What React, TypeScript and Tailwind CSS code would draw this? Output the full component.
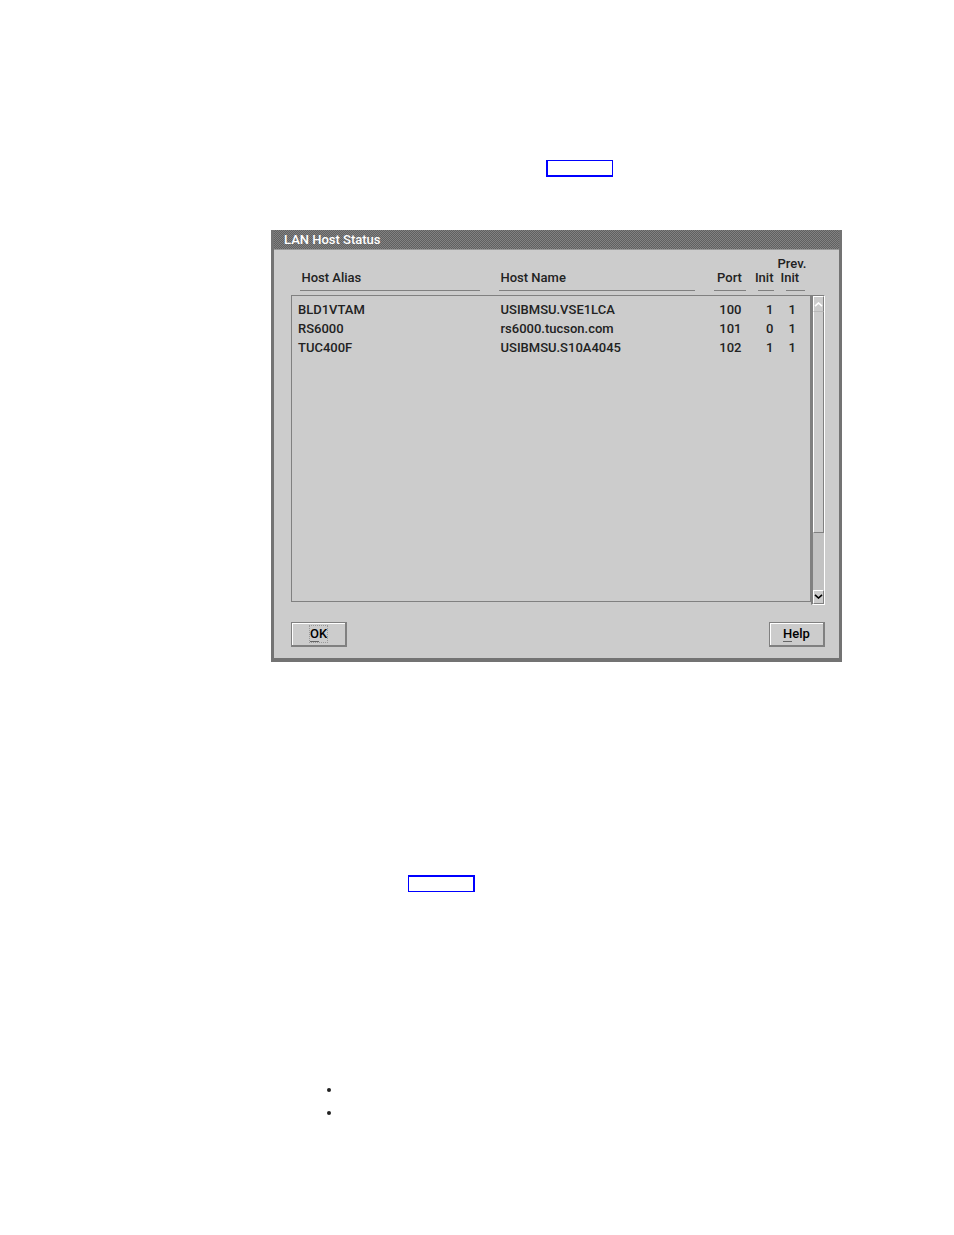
import React from "react";

interface Host {
  alias: string;
  name: string;
  port: number;
  init: number;
  prevInit: number;
}

const HOSTS: Host[] = [
  { alias: "BLD1VTAM", name: "USIBMSU.VSE1LCA", port: 100, init: 1, prevInit: 1 },
  { alias: "RS6000", name: "rs6000.tucson.com", port: 101, init: 0, prevInit: 1 },
  { alias: "TUC400F", name: "USIBMSU.S10A4045", port: 102, init: 1, prevInit: 1 },
];

function DialogButton({ label, focused }: { label: string; focused?: boolean }) {
  return (
    <button
      type="button"
      className="h-[25px] w-14 border border-[#808080] border-r-2 border-b-2 bg-[#cccccc] shadow-[inset_1px_1px_0_#ffffff] flex items-center justify-center text-black"
    >
      <span
        className={
          focused
            ? "leading-4 outline outline-dotted outline-[#999999]"
            : "leading-4"
        }
      >
        <span className="border-b border-[#666666]">{label[0]}</span>
        {label.slice(1)}
      </span>
    </button>
  );
}

function ScrollBar() {
  return (
    <div className="w-[14px] flex flex-col border-l-2 border-t border-l-[#808080] border-t-[#808080] border-r border-b border-r-white border-b-white bg-[#c2c2c2]">
      <button
        type="button"
        aria-label="Scroll up"
        className="h-[15px] bg-[#cccccc] border-t border-l border-white border-r border-r-[#808080] flex items-center justify-center"
      >
        <svg width="9" height="5" viewBox="0 0 9 5" fill="none">
          <path d="M1 4.2 L4.5 1 L8 4.2" stroke="#ffffff" strokeWidth="1.6" />
        </svg>
      </button>
      <div className="h-[222px] bg-[#cccccc] border-l border-l-white border-t border-t-[#b8b8b8] border-r border-b border-r-[#808080] border-b-[#808080]" />
      <div className="flex-1" />
      <button
        type="button"
        aria-label="Scroll down"
        className="h-[14px] bg-[#cccccc] border-t border-l border-white border-r border-b border-r-[#808080] border-b-[#808080] flex items-center justify-center"
      >
        <svg width="9" height="5" viewBox="0 0 9 5" fill="none">
          <path d="M1 0.8 L4.5 4 L8 0.8" stroke="#000000" strokeWidth="1.6" />
        </svg>
      </button>
    </div>
  );
}

function HostTable() {
  return (
    <table className="flex-1 table-fixed border-collapse text-left">
      <colgroup>
        <col className="w-[207px]" />
        <col />
        <col className="w-9" />
        <col className="w-7" />
        <col className="w-[33px]" />
      </colgroup>
      <thead>
        <tr className="h-11 align-bottom leading-[14px]">
          <th className="font-medium pl-2 pr-[19px] pb-1">
            <div className="border-b border-[#808080] pl-0.5 pb-[5px]">Host Alias</div>
          </th>
          <th className="font-medium pr-[19px] pb-1">
            <div className="border-b border-[#808080] pl-0.5 pb-[5px]">Host Name</div>
          </th>
          <th className="font-medium pr-1 pb-1">
            <div className="border-b border-[#808080] pb-[5px] text-center">Port</div>
          </th>
          <th className="font-medium pr-1 pb-1">
            <div className="pb-[5px] text-right">Init</div>
            <div className="ml-2 border-b border-[#808080]" />
          </th>
          <th className="font-medium pb-1">
            <div>Prev.</div>
            <div className="pl-[3px] pb-[5px]">Init</div>
            <div className="ml-2 mr-1.5 border-b border-[#808080]" />
          </th>
        </tr>
      </thead>
      <tbody className="border border-[#808080]">
        <tr className="h-[5px]" />
        {HOSTS.map((host) => (
          <tr key={host.alias} className="h-[19px] leading-[19px]">
            <td className="pl-1.5">{host.alias}</td>
            <td className="pl-0.5">{host.name}</td>
            <td className="pr-2 text-right">{host.port}</td>
            <td className="pr-1 text-right">{host.init}</td>
            <td className="pr-3.5 text-right">{host.prevInit}</td>
          </tr>
        ))}
        {/* empty part of the list */}
        <tr className="h-[244px]" />
      </tbody>
    </table>
  );
}

function HostStatusWindow() {
  return (
    <section className="border-x-[3px] border-b-4 border-[#737373] bg-[#cccccc]">
      <h1 className="h-5 pl-2.5 leading-5 font-medium text-white border-b border-[#999999] bg-[#696969] bg-[repeating-conic-gradient(#606060_0%_25%,#828282_0%_50%)] bg-size-[2px_2px]">
        LAN Host Status
      </h1>
      <div className="pt-px pl-[17px] pr-3.5 pb-[11px]">
        <div className="flex">
          <HostTable />
          <div className="flex pt-11 -mb-[3px]">
            <ScrollBar />
          </div>
        </div>
        <div className="mt-5 flex justify-between">
          <DialogButton label="OK" focused />
          <DialogButton label="Help" />
        </div>
      </div>
    </section>
  );
}

export default function App() {
  return (
    <main className="min-h-screen bg-white pt-40 pl-[271px] pr-[112px] font-['Roboto',sans-serif] text-[13px] font-medium text-[#222222]">
      <a
        href="#status"
        aria-label="Host status"
        className="block ml-[275px] h-[17px] w-[67px] border border-[#0000ff] border-l-2 border-b-2"
      />
      <div id="status" className="mt-[53px]">
        <HostStatusWindow />
      </div>
      <a
        href="#notes"
        aria-label="Notes"
        className="block mt-[213px] ml-[137px] h-[17px] w-[67px] border border-[#0000ff] border-t-2 border-r-2"
      />
      <ul id="notes" className="mt-[196px] ml-14 flex flex-col gap-[19px]">
        <li className="size-1 rounded-full bg-[#222222]" />
        <li className="size-1 rounded-full bg-[#222222]" />
      </ul>
    </main>
  );
}
